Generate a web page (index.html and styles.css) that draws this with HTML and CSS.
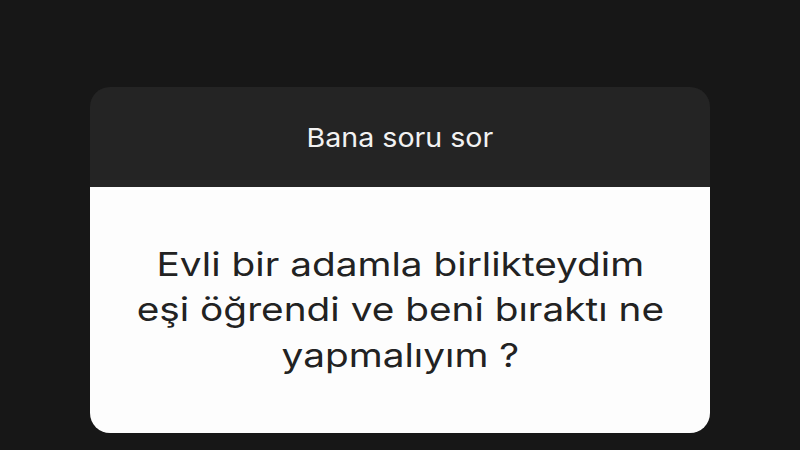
FILE: index.html
```html
<!doctype html>
<html lang="tr">
  <head>
    <meta charset="UTF-8" />
    <meta name="viewport" content="width=device-width, initial-scale=1.0" />
    <title>Bana soru sor</title>
    <link rel="stylesheet" href="styles.css">
  </head>
  <body>
    <div class="wrapper">
      <div class="question-card">
        <header class="card-head">
          <p>Bana soru sor</p>
        </header>
        <main class="card-body">
          <p>Evli bir adamla birlikteydim<br />eşi öğrendi ve beni bıraktı ne<br />yapmalıyım ?</p>
        </main>
      </div>
    </div>
  </body>
</html>
```

FILE: styles.css
```css
html {
  font-family: Inter, "Liberation Sans", sans-serif;
  background: #171717;
}
body {
  margin: 0;
}
p {
  margin: 0;
}
.wrapper {
  width: 620px;
  margin: 0 auto;
  padding-top: 87px;
}
.question-card {
  border-radius: 20px;
  overflow: hidden;
}
.card-head {
  height: 100px;
  background: #242424;
  display: flex;
  justify-content: center;
  align-items: center;
}
.card-head p {
  color: #f2f2f2;
  font-size: 26px;
  transform: scaleX(1.1);
}
.card-body {
  height: 246px;
  background: #fdfdfd;
  display: flex;
  justify-content: center;
  align-items: center;
  text-align: center;
}
.card-body p {
  color: #222;
  font-size: 33px;
  line-height: 45.5px;
  transform: scaleX(1.175);
}
```
